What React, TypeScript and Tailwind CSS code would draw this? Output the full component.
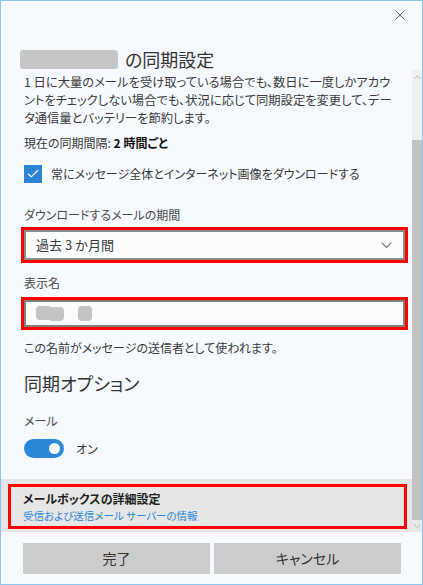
import { Check } from "lucide-react"

const font = "font-['Noto_Sans_CJK_JP','Noto_Sans',sans-serif] [font-feature-settings:'palt']"

function CloseIcon() {
  return (
    <svg width="10" height="10" viewBox="0 0 10 10" className="block">
      <path d="M0.5 0.5 L9.5 9.5 M9.5 0.5 L0.5 9.5" stroke="#6b6b6b" strokeWidth="1" fill="none" />
    </svg>
  )
}

function Chevron({ up = false, size = 10, color = "#6e6e6e" }: { up?: boolean; size?: number; color?: string }) {
  return (
    <svg width={size} height={size / 2 + 1} viewBox="0 0 10 6" className="block">
      <path d={up ? "M0.5 5.5 L5 1 L9.5 5.5" : "M0.5 0.5 L5 5 L9.5 0.5"} stroke={color} strokeWidth="1" fill="none" />
    </svg>
  )
}

function ScrollBar() {
  return (
    <div className="w-[10px] h-[462px] flex flex-col bg-[#f0f0f0]">
      <div className="h-[14px] flex items-center justify-center">
        <Chevron up size={7} color="#a0a0a0" />
      </div>
      <div className="h-[56px]" />
      <div className="h-[380px] bg-[#c2c2c2]" />
      <div className="h-[12px] flex items-center justify-center bg-[#e8e8e8]">
        <Chevron size={7} color="#a0a0a0" />
      </div>
    </div>
  )
}

export default function App() {
  return (
    <div className={`w-[423px] h-[585px] border border-[#8fc6ee] bg-[#f6f9fd] flex flex-col overflow-hidden text-[#3a3a3a] ${font}`}>
      {/* header */}
      <div className="pt-[9px] pr-[17px] flex justify-end">
        <CloseIcon />
      </div>
      <div className="mt-[28px] h-[22px] flex items-center pl-[19px]">
        <div className="w-[98px] h-[19px] rounded-[3px] bg-[#c6c6c6] blur-[0.5px]" />
        <span className="ml-[7px] text-[18px] leading-[22px] text-[#333]">の同期設定</span>
      </div>

      {/* scrollable body */}
      <div className="flex h-[462px]">
        <div className="flex-1 flex flex-col">
          <div className="pl-[23px] flex flex-col text-[12px] leading-[18px]">
            <p className="pt-[3px] whitespace-nowrap text-[12.3px]">
              1 日に大量のメールを受け取っている場合でも、数日に一度しかアカウ
              <br />
              ントをチェックしない場合でも、状況に応じて同期設定を変更して、デー
              <br />
              タ通信量とバッテリーを節約します。
            </p>
            <p className="mt-[7px]">
              現在の同期間隔: <span className="font-bold text-[#111]">2 時間ごと</span>
            </p>
            <div className="mt-[13px] flex items-center h-[18px]">
              <div className="w-[18px] h-[18px] bg-[#2b85d3] flex items-center justify-center">
                <Check className="w-[14px] h-[14px] text-white" strokeWidth={2} />
              </div>
              <span className="ml-[9px]">常にメッセージ全体とインターネット画像をダウンロードする</span>
            </div>

            <p className="mt-[23px] text-[#4a4a4a]">ダウンロードするメールの期間</p>
            <div className="mt-[3px] -ml-[3px] w-[387px] border-[3px] border-[#ff0000]">
              <div className="h-[30px] border-2 border-[#8c8c8c] bg-[#fbfcfe] flex items-center justify-between pl-[10px] pr-[11px]">
                <span className="text-[13px] [font-feature-settings:normal]">過去 3 か月間</span>
                <Chevron size={11} />
              </div>
            </div>

            <p className="mt-[11px] text-[#4a4a4a]">表示名</p>
            <div className="mt-[5px] -ml-[3px] w-[387px] border-[3px] border-[#ff0000]">
              <div className="h-[27px] border-2 border-[#7f7f7f] bg-[#fbfcfe] flex items-center pl-[10px] gap-[14px]">
                <div className="flex">
                  <div className="w-[16px] h-[14px] rounded-[4px] bg-[#c4c4c4]" />
                  <div className="-ml-[4px] mt-[1px] w-[16px] h-[14px] rounded-[4px] bg-[#c4c4c4]" />
                </div>
                <div className="w-[14px] h-[15px] rounded-[4px] bg-[#c4c4c4]" />
              </div>
            </div>

            <p className="mt-[9px]">この名前がメッセージの送信者として使われます。</p>

            <h2 className="mt-[14px] text-[18px] leading-[24px] text-[#333]">同期オプション</h2>

            <p className="mt-[17px] text-[#4a4a4a]">メール</p>
            <div className="mt-[9px] flex items-center h-[19px]">
              <div className="w-[40px] h-[19px] rounded-full bg-[#2b88d8] flex items-center justify-end pr-[4px]">
                <div className="w-[11px] h-[11px] rounded-full bg-white" />
              </div>
              <span className="ml-[12px]">オン</span>
            </div>
          </div>

          {/* advanced mailbox settings */}
          <div className="mt-[21px] h-[54px] bg-[#e6e6e6] pt-[5px] pl-[7px] pr-[5px]">
            <div className="h-[45px] border-[3px] border-[#ff0000] pl-[12px] pt-[3px]">
              <p className="text-[12px] leading-[18px] font-bold text-[#1f1f1f]">メールボックスの詳細設定</p>
              <p className="text-[10.5px] leading-[16px] text-[#2b88d8]">受信および送信メール サーバーの情報</p>
            </div>
          </div>
        </div>
        <ScrollBar />
      </div>

      {/* footer buttons */}
      <div className="pt-[11px] pl-[22px] grid grid-cols-2 gap-[4px] w-[400px]">
        <button className="h-[31px] bg-[#cccccc] text-[14px] text-[#333]">完了</button>
        <button className="h-[31px] bg-[#cccccc] text-[14px] text-[#333]">キャンセル</button>
      </div>
    </div>
  )
}
